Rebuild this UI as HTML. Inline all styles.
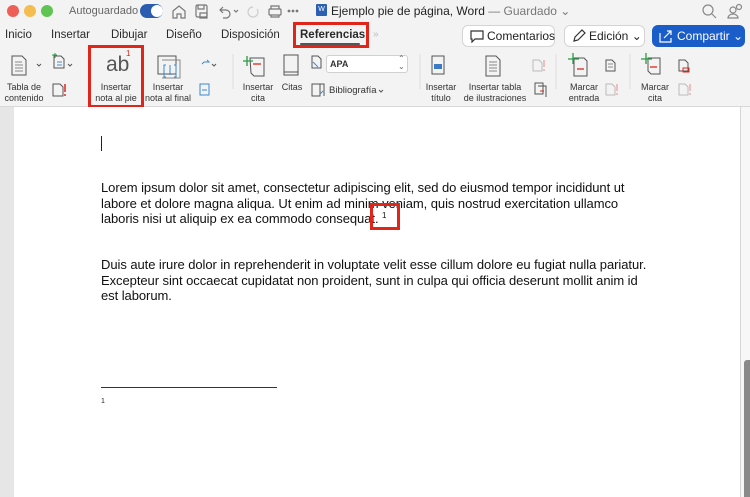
<!DOCTYPE html>
<html><head><meta charset="utf-8"><style>
*{margin:0;padding:0;box-sizing:border-box}
body{width:750px;height:497px;overflow:hidden;background:#f3f3f3;font-family:"Liberation Sans",Arial,sans-serif;position:relative;color:#222}
.a{position:absolute;white-space:nowrap}
.t{font-size:11px;color:#2a2a2a}
.s{font-size:9px;color:#333;text-align:center;line-height:11px}
.doc{font-size:13px;line-height:15.5px;color:#111;letter-spacing:-0.06px}
.red{position:absolute;border:3px solid #e0261b}
.ic{position:absolute}
.btn{position:absolute;background:#fff;border:1px solid #d4d4d4;border-radius:6px;font-size:12px;color:#222;height:22px;line-height:20px}
</style></head><body>
<div class="a" style="left:0;top:0;width:750px;height:107px;background:#f3f3f3"></div>
<div class="ic" style="left:7px;top:5px;width:12px;height:12px;border-radius:50%;background:#ed5f57"></div>
<div class="ic" style="left:24px;top:5px;width:12px;height:12px;border-radius:50%;background:#f5bd4f"></div>
<div class="ic" style="left:41px;top:5px;width:12px;height:12px;border-radius:50%;background:#5fc454"></div>
<div class="a t" style="left:69px;top:5px;color:#666;font-size:11px">Autoguardado</div>
<div class="ic" style="left:140px;top:4px;width:23px;height:14px;border-radius:7px;background:#2a5db0"></div>
<div class="ic" style="left:151px;top:5px;width:12px;height:12px;border-radius:50%;background:#fff"></div>
<svg class="ic" style="left:170px;top:2px" width="130" height="18" viewBox="0 0 130 18" fill="none" stroke="#777" stroke-width="1.2">
<path d="M3 9l6-5 6 5v7H11v-4H7v4H3z"/>
<rect x="26" y="3" width="11" height="12" rx="1.5"/><path d="M28 3v4h6V3M30 11h7v5h-7z"/>
<path d="M53 5l-3 3 3 3M50 8h6a4 4 0 010 8h-3"/><path d="M64 8l2 2 2-2"/>
<path d="M83 5a5 5 0 104 2" stroke="#ccc"/>
<rect x="99" y="7" width="12" height="6" rx="1"/><path d="M101 7V4h8v3M101 13v2h8v-2"/>
<circle cx="119" cy="9" r=".8" fill="#777"/><circle cx="123" cy="9" r=".8" fill="#777"/><circle cx="127" cy="9" r=".8" fill="#777"/>
</svg>
<div class="ic" style="left:316px;top:4px;width:11px;height:12px;background:#2b5fb3;border-radius:1px;color:#fff;font-size:7px;text-align:center;line-height:12px">W</div>
<div class="a" style="left:331px;top:4px;font-size:12px;color:#222">Ejemplo pie de página, Word <span style="color:#777">— Guardado ⌄</span></div>
<svg class="ic" style="left:700px;top:2px" width="46" height="18" fill="none" stroke="#888" stroke-width="1.2"><circle cx="8" cy="8" r="5"/><path d="M12 12l4 4"/><circle cx="33" cy="8" r="3"/><circle cx="39" cy="5" r="2.5"/><path d="M28 16a5 4 0 0110 0z"/></svg>
<div class="a t" style="left:5px;top:29px;font-size:11.5px">Inicio</div>
<div class="a t" style="left:51px;top:29px;font-size:11.5px">Insertar</div>
<div class="a t" style="left:111px;top:29px;font-size:11.5px">Dibujar</div>
<div class="a t" style="left:166px;top:29px;font-size:11.5px">Diseño</div>
<div class="a t" style="left:221px;top:29px;font-size:11.5px">Disposición</div>
<div class="a t" style="left:300px;top:29px;font-size:11.5px;font-weight:bold">Referencias</div>
<div class="ic" style="left:300px;top:43px;width:60px;height:2px;background:#555;border-radius:1px"></div>
<div class="red" style="left:293px;top:22px;width:76px;height:26px"></div>
<div class="a" style="left:373px;top:29px;font-size:10px;color:#bbb">»</div>
<div class="btn" style="left:462px;top:25px;width:93px;padding-left:24px">Comentarios</div>
<svg class="ic" style="left:470px;top:30px" width="14" height="13" fill="none" stroke="#333" stroke-width="1.2"><path d="M1 1h12v8H5l-3 3V9H1z"/></svg>
<div class="btn" style="left:564px;top:25px;width:81px;padding-left:24px">Edición ⌄</div>
<svg class="ic" style="left:572px;top:29px" width="14" height="14" fill="none" stroke="#333" stroke-width="1.2"><path d="M2 12l1-4 7-7 3 3-7 7z"/></svg>
<div class="btn" style="left:652px;top:25px;width:93px;padding-left:24px;background:#1a5cc8;border-color:#1a5cc8;color:#fff">Compartir ⌄</div>
<svg class="ic" style="left:659px;top:29px" width="14" height="14" fill="none" stroke="#fff" stroke-width="1.2"><path d="M1 4v9h11V9M5 9l7-7M8 2h4v4"/></svg>
<div class="ic" style="left:0;top:106px;width:750px;height:1px;background:#d8d8d8"></div>
<svg class="ic" style="left:0;top:50px" width="750" height="56" fill="none" stroke="#555" stroke-width="1">
<path d="M12 6h10l4 4v15H12z"/><path d="M15 12h7M15 15h8M15 18h8M15 21h8" stroke="#888"/>
<path d="M37 14l2 2 2-2"/>
<path d="M54 6h7l3 3v9H54z"/><path d="M55 3v5M52 5h5" stroke="#2a9a46"/><path d="M57 12h5M57 15h5" stroke="#4a8cd6"/><path d="M68 14l2 2 2-2"/>
<path d="M53 34h7l3 3v9H53z"/><path d="M65 34v8M65 44v2" stroke="#e0261b" stroke-width="1.5"/>
<path d="M158 6h18v18H158z"/><path d="M162 10h18v18h-18" stroke="#888"/><path d="M170 15v10M166 15h-2v12h2M174 15h2v12h-2" stroke="#3a8ad6"/>
<path d="M212 14l2 2 2-2"/><path d="M204 12h5l-2-2M204 12l-2 2" stroke="#3a8ad6"/>
<rect x="200" y="34" width="9" height="11" stroke="#3a8ad6"/><path d="M202 40h5" stroke="#3a8ad6"/>
<path d="M233 4v35" stroke="#ddd"/>
<path d="M250 8h14v18h-10l-3-3z"/><path d="M247 6v10M243 11h10" stroke="#2a9a46" stroke-width="1.3"/><path d="M253 14h8" stroke="#e0261b" stroke-width="1.3"/>
<path d="M284 5h14v20h-14z M284 22h14"/>
<path d="M312 6h6l3 3v9h-9z"/><path d="M313 12l5 5" stroke="#3a8ad6"/>
<path d="M312 34h8v12h-8zM316 34h8v12"/><path d="M320 44l3-3" stroke="#3a8ad6"/>
<path d="M379 40l2 2 2-2"/>
<path d="M420 4v35" stroke="#ddd"/>
<path d="M432 6h12v18h-12z"/><rect x="434" y="14" width="8" height="5" fill="#3a7ac8" stroke="none"/>
<path d="M486 6h10l4 4v16h-14z"/><path d="M489 12h8M489 15h8M489 18h8M489 21h8" stroke="#888"/>
<path d="M533 10h6l3 3v8h-9z" stroke="#bbb"/><path d="M544 10v7M544 19v2" stroke="#e88"/>
<path d="M535 33h8v11h-8zM538 36h8v11" /><path d="M540 41h4" stroke="#e0261b"/>
<path d="M556 4v35" stroke="#ddd"/>
<path d="M574 8h10l3 3v15h-13z"/><path d="M573 3v11M568 9h11" stroke="#2a9a46" stroke-width="1.3"/><path d="M577 19h7" stroke="#e0261b" stroke-width="1.3"/>
<path d="M606 10h6l3 3v8h-9z"/><path d="M608 14h5M608 17h5" stroke="#888"/>
<path d="M606 34h6l3 3v8h-9z" stroke="#bbb"/><path d="M617 34v7M617 43v2" stroke="#e88"/>
<path d="M630 4v35" stroke="#ddd"/>
<path d="M648 8h12v16h-9l-3-3z"/><path d="M646 3v11M641 9h11" stroke="#2a9a46" stroke-width="1.3"/><path d="M650 17h7" stroke="#e0261b" stroke-width="1.3"/>
<path d="M679 10h6l3 3v8h-9z"/><path d="M683 18h6v4h-6z" stroke="#e0261b"/>
<path d="M679 34h6l3 3v8h-9z" stroke="#bbb"/><path d="M690 34v7M690 43v2" stroke="#e88"/>
</svg>
<div class="a" style="left:106px;top:53px;font-size:21px;color:#555">ab</div>
<div class="a" style="left:126px;top:49px;font-size:8px;color:#e0261b">1</div>
<div class="a s" style="left:4px;top:82px;width:40px">Tabla de<br>contenido</div>
<div class="a s" style="left:94px;top:82px;width:44px">Insertar<br>nota al pie</div>
<div class="red" style="left:88px;top:45px;width:56px;height:63px"></div>
<div class="a s" style="left:144px;top:82px;width:48px">Insertar<br>nota al final</div>
<div class="a s" style="left:240px;top:82px;width:36px">Insertar<br>cita</div>
<div class="a s" style="left:280px;top:82px;width:24px">Citas</div>
<div class="ic" style="left:326px;top:55px;width:82px;height:18px;background:#fff;border:1px solid #d0d0d0;border-radius:3px"></div>
<div class="a" style="left:330px;top:59px;font-size:9px;font-weight:bold;color:#333">APA</div>
<div class="a" style="left:398px;top:55px;font-size:8px;color:#666;line-height:8px">⌃<br>⌄</div>
<div class="a" style="left:329px;top:85px;font-size:9.5px;color:#333">Bibliografía</div>
<div class="a s" style="left:423px;top:82px;width:36px">Insertar<br>título</div>
<div class="a s" style="left:462px;top:82px;width:66px">Insertar tabla<br>de ilustraciones</div>
<div class="a s" style="left:563px;top:82px;width:42px">Marcar<br>entrada</div>
<div class="a s" style="left:637px;top:82px;width:36px">Marcar<br>cita</div>
<div class="ic" style="left:0;top:107px;width:14px;height:390px;background:#e6e6e6"></div>
<div class="ic" style="left:14px;top:107px;width:727px;height:390px;background:#fff"></div>
<div class="ic" style="left:740px;top:107px;width:1px;height:390px;background:#d6d6d6"></div>
<div class="ic" style="left:741px;top:107px;width:9px;height:390px;background:#f7f7f7"></div>
<div class="ic" style="left:744px;top:360px;width:6px;height:137px;background:#8a8a8a;border-radius:3px 0 0 0"></div>
<div class="ic" style="left:101px;top:136px;width:1px;height:15px;background:#222"></div>
<div class="a doc" style="left:101px;top:180px">Lorem ipsum dolor sit amet, consectetur adipiscing elit, sed do eiusmod tempor incididunt ut<br>labore et dolore magna aliqua. Ut enim ad minim veniam, quis nostrud exercitation ullamco<br>laboris nisi ut aliquip ex ea commodo consequat.</div>
<div class="a" style="left:382px;top:211px;font-size:8px;color:#111">1</div>
<div class="red" style="left:370px;top:203px;width:30px;height:27px"></div>
<div class="a doc" style="left:101px;top:257px">Duis aute irure dolor in reprehenderit in voluptate velit esse cillum dolore eu fugiat nulla pariatur.<br>Excepteur sint occaecat cupidatat non proident, sunt in culpa qui officia deserunt mollit anim id<br>est laborum.</div>
<div class="ic" style="left:101px;top:387px;width:176px;height:1px;background:#333"></div>
<div class="a" style="left:101px;top:398px;font-size:7px;color:#222">1</div>
</body></html>
